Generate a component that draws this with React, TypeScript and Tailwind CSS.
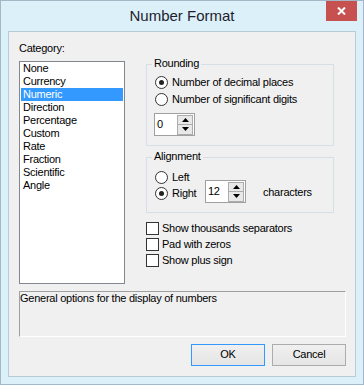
import React from "react";

const categories = [
  "None",
  "Currency",
  "Numeric",
  "Direction",
  "Percentage",
  "Custom",
  "Rate",
  "Fraction",
  "Scientific",
  "Angle",
];

function Radio({ checked }: { checked?: boolean }) {
  return (
    <span className="flex h-[13px] w-[13px] shrink-0 items-center justify-center rounded-full border border-[#333] bg-white">
      {checked && <span className="h-[5px] w-[5px] rounded-full bg-[#222]" />}
    </span>
  );
}

function Checkbox() {
  return <span className="h-[13px] w-[13px] shrink-0 border border-[#333] bg-white" />;
}

function Arrow({ up }: { up?: boolean }) {
  return (
    <svg width="7" height="4" viewBox="0 0 7 4">
      <path d={up ? "M0 4 L3.5 0 L7 4 Z" : "M0 0 L3.5 4 L7 0 Z"} fill="#000" />
    </svg>
  );
}

function Spinner({ value, className }: { value: string; className?: string }) {
  return (
    <div
      className={`flex h-[23px] w-[41px] items-center justify-between border border-[#a0a0a0] bg-white pr-[1px] ${className ?? ""}`}
    >
      <span className="pl-[2px]">{value}</span>
      <div className="flex flex-col">
        <span className="flex h-[10px] w-[16px] items-center justify-center border border-[#acacac] bg-[#e8e8e8]">
          <Arrow up />
        </span>
        <span className="flex h-[10px] w-[16px] items-center justify-center border border-t-0 border-[#acacac] bg-[#e8e8e8]">
          <Arrow />
        </span>
      </div>
    </div>
  );
}

function Group({ label, className, children }: { label: string; className?: string; children: React.ReactNode }) {
  return (
    <div className={`relative border border-[#d5dfe5] ${className ?? ""}`}>
      <span className="absolute left-[5px] top-[-8px] bg-[#f0f0f0] px-[2px]">{label}</span>
      {children}
    </div>
  );
}

export default function App() {
  return (
    <div className="flex h-[385px] w-[364px] flex-col border border-[#a3b8c6] bg-[#dcf0fa] font-[Liberation_Sans,Arial,sans-serif]">
      <div className="relative h-[30px] shrink-0 pt-[6px] text-center text-[15px] leading-[18px] text-[#1e1e2e]">
        Number Format
        <button className="absolute right-[6px] top-0 flex h-[20px] w-[31px] items-center justify-center bg-[#c75050]">
          <svg width="9" height="8" viewBox="0 0 9 8">
            <path d="M1 0.5 L8 7.5 M8 0.5 L1 7.5" stroke="#fff" strokeWidth="2" />
          </svg>
        </button>
      </div>

      <div className="mx-[7px] h-[346px] border border-[#b5cbd8] bg-[#f0f0f0] pl-[10px] pr-[9px] text-[11px] leading-[13px] tracking-[-0.25px] text-black">
        <div className="flex">
          <div className="w-[106px] pt-[10px]">
            <div>Category:</div>
            <div className="mt-[6px] h-[223px] border border-[#828790] bg-white px-[1px]">
              {categories.map((c) => (
                <div
                  key={c}
                  className={`h-[13px] pl-[2px] ${c === "Numeric" ? "bg-[#3399ff] text-white" : ""}`}
                >
                  {c}
                </div>
              ))}
            </div>
          </div>

          <div className="ml-[21px] w-[188px] pt-[32px]">
            <Group label="Rounding" className="h-[82px] pl-[8px] pt-[9px]">
              <div className="flex h-[17px] items-center gap-[4px]">
                <Radio checked />
                <span>Number of decimal places</span>
              </div>
              <div className="flex h-[17px] items-center gap-[4px]">
                <Radio />
                <span>Number of significant digits</span>
              </div>
              <Spinner value="0" className="ml-[-1px] mt-[5px]" />
            </Group>

            <Group label="Alignment" className="mt-[11px] flex h-[56px] pl-[8px]">
              <div className="w-[50px] pt-[11px]">
                <div className="flex h-[16px] items-center gap-[4px]">
                  <Radio />
                  <span>Left</span>
                </div>
                <div className="flex h-[16px] items-center gap-[4px]">
                  <Radio checked />
                  <span>Right</span>
                </div>
              </div>
              <Spinner value="12" className="mt-[22px]" />
              <span className="ml-[17px] mt-[28px]">characters</span>
            </Group>

            <div className="mt-[7px]">
              {["Show thousands separators", "Pad with zeros", "Show plus sign"].map((t) => (
                <div key={t} className="flex h-[16px] items-center gap-[3px]">
                  <Checkbox />
                  <span>{t}</span>
                </div>
              ))}
            </div>
          </div>
        </div>

        <div className="mt-[7px] h-[46px] w-[327px] border border-[#a0a0a0] border-b-white border-r-white">
          General options for the display of numbers
        </div>

        <div className="mt-[7px] flex justify-end gap-[7px]">
          <button className="flex h-[22px] w-[74px] items-center justify-center border border-[#3399ff] bg-gradient-to-b from-[#f0f0f0] to-[#e5e5e5] pb-[2px]">
            OK
          </button>
          <button className="flex h-[22px] w-[74px] items-center justify-center border border-[#acacac] bg-gradient-to-b from-[#f0f0f0] to-[#e5e5e5] pb-[2px]">
            Cancel
          </button>
        </div>
      </div>
    </div>
  );
}
